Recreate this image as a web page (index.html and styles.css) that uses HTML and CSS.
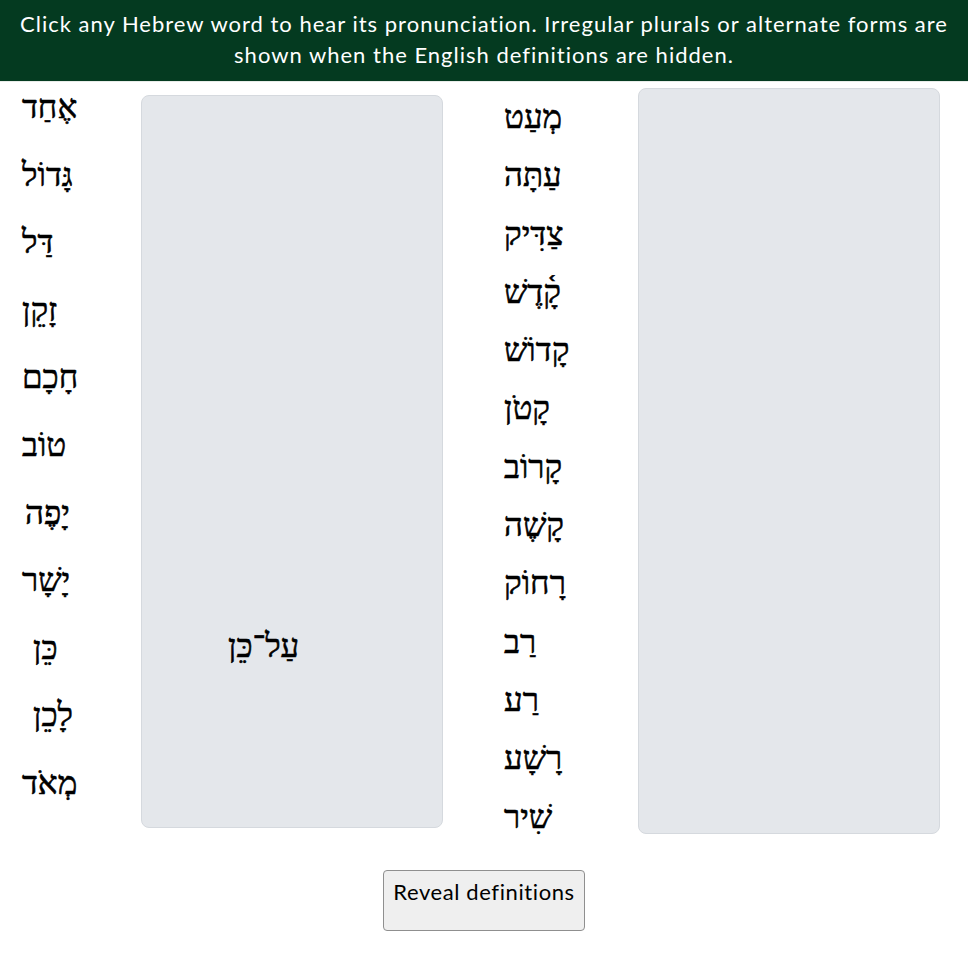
FILE: index.html
```html
<!DOCTYPE html>
<html lang="en">
<head>
<meta charset="utf-8">
<title>Hebrew vocabulary</title>
<link rel="stylesheet" href="styles.css">
</head>
<body>
<header class="banner">
  <p class="banner-text">Click any Hebrew word to hear its pronunciation. Irregular plurals or alternate forms are shown when the English definitions are hidden.</p>
</header>
<main class="content">
  <section class="group group-left">
    <ul class="words words-left">
      <li class="word" dir="rtl">אֶחַד</li>
      <li class="word" dir="rtl">גָּדוֹל</li>
      <li class="word" dir="rtl">דַּל</li>
      <li class="word" dir="rtl">זָקֵן</li>
      <li class="word" dir="rtl">חָכָם</li>
      <li class="word" dir="rtl">טוֹב</li>
      <li class="word shift-s" dir="rtl">יָפֶה</li>
      <li class="word" dir="rtl">יָשָׁר</li>
      <li class="word shift" dir="rtl">כֵּן</li>
      <li class="word shift" dir="rtl">לָכֵן</li>
      <li class="word" dir="rtl">מְאֹד</li>
    </ul>
    <div class="def-box def-box-left">
      <span class="alt-form" dir="rtl">עַל־כֵּן</span>
    </div>
  </section>
  <section class="group group-right">
    <ul class="words words-right">
      <li class="word" dir="rtl">מְעַט</li>
      <li class="word" dir="rtl">עַתָּה</li>
      <li class="word" dir="rtl">צַדִּיק</li>
      <li class="word" dir="rtl">קָ֫דֶשׁ</li>
      <li class="word" dir="rtl">קָדוֹשׁ</li>
      <li class="word" dir="rtl">קָטֹן</li>
      <li class="word" dir="rtl">קָרוֹב</li>
      <li class="word" dir="rtl">קָשֶׁה</li>
      <li class="word" dir="rtl">רָחוֹק</li>
      <li class="word" dir="rtl">רַב</li>
      <li class="word" dir="rtl">רַע</li>
      <li class="word" dir="rtl">רָשָׁע</li>
      <li class="word" dir="rtl">שִׁיר</li>
    </ul>
    <div class="def-box def-box-right"></div>
  </section>
</main>
<div class="actions">
  <button class="reveal-btn" type="button">Reveal definitions</button>
</div>
</body>
</html>
```

FILE: styles.css
```css
* { box-sizing: border-box; }

html, body {
  margin: 0;
  padding: 0;
  background: #ffffff;
}

body {
  font-family: Lato, "Open Sans", sans-serif;
  color: #000;
}

.banner {
  background: #043a20;
  height: 82px;
  border-bottom: 1px solid #e8ece9;
  padding: 8px 10px 0;
}

.banner-text {
  margin: 0;
  color: #ffffff;
  font-size: 22px;
  letter-spacing: 1px;
  line-height: 31px;
  text-align: center;
}

.content {
  display: flex;
  align-items: flex-start;
  padding-left: 22px;
}

.group {
  display: flex;
  align-items: flex-start;
}

.words {
  list-style: none;
  margin: 0;
  padding: 0;
  display: flex;
  flex-direction: column;
  align-items: flex-start;
}

.word,
.alt-form {
  font-family: "Liberation Serif", "DejaVu Serif", serif;
  font-size: 33px;
  line-height: 40px;
  -webkit-text-stroke: 0.6px #000;
}

.word {
  height: 40px;
  cursor: pointer;
  text-align: left;
}

.word.shift { padding-left: 11px; }
.word.shift-s { padding-left: 3px; }

.words-left {
  width: 119px;
  padding-top: 5px;
  gap: 27.6px;
}

.words-right {
  width: 134px;
  padding-top: 15px;
  gap: 18.3px;
}

.group-right { margin-left: 61px; }

.def-box {
  width: 302px;
  background: #e4e7eb;
  border: 1px solid #d5d9de;
  border-radius: 8px;
}

.def-box-left {
  margin-top: 13px;
  height: 733px;
  padding: 530px 0 0 86px;
}

.def-box-right {
  margin-top: 6px;
  height: 746px;
}

.alt-form {
  display: inline-block;
}

.actions {
  display: flex;
  justify-content: center;
  margin-top: 33px;
}

.reveal-btn {
  width: 202px;
  height: 61px;
  background: #efefef;
  border: 1px solid #8f8f8f;
  border-radius: 4px;
  font-family: Lato, "Open Sans", sans-serif;
  font-size: 22px;
  letter-spacing: 0.6px;
  line-height: 30px;
  color: #000;
  padding: 6px 0 0;
  display: flex;
  justify-content: center;
  align-items: flex-start;
  cursor: pointer;
}
```
